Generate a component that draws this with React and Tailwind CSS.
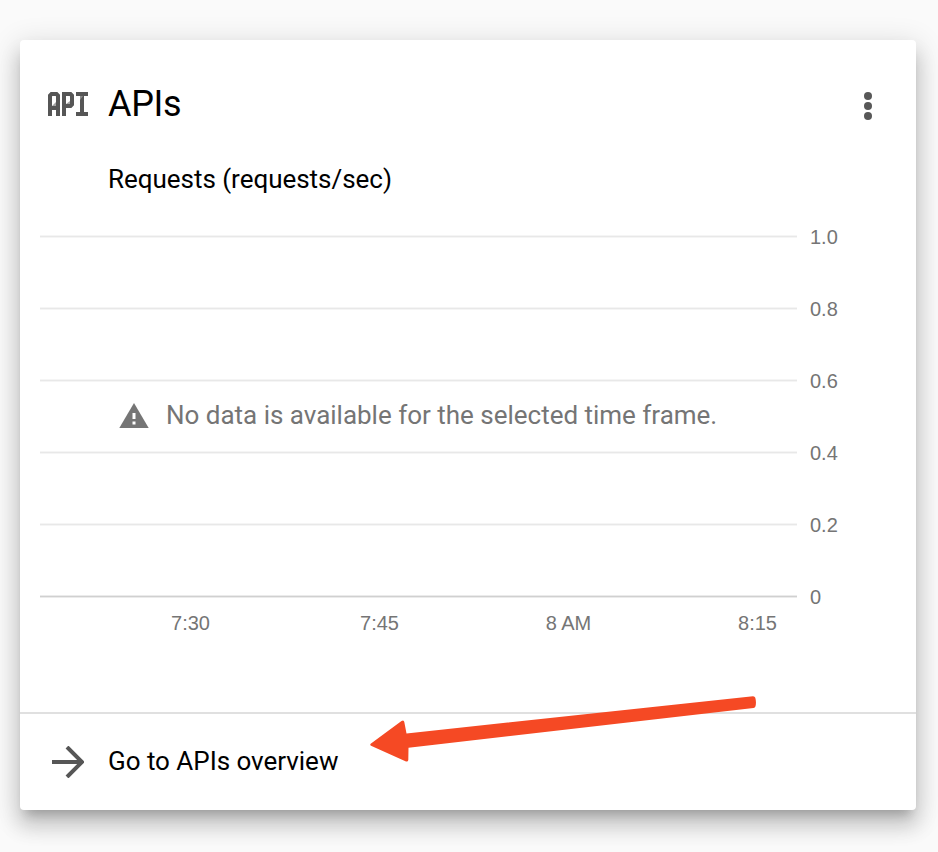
const ticks = [
  { label: '1.0', line: 'border-[#f5f5f5] bg-[#e8e8e8]' },
  { label: '0.8', line: 'border-[#f5f5f5] bg-[#e8e8e8]' },
  { label: '0.6', line: 'border-[#f5f5f5] bg-[#e8e8e8]' },
  { label: '0.4', line: 'border-[#f5f5f5] bg-[#e8e8e8]' },
  { label: '0.2', line: 'border-[#f5f5f5] bg-[#e8e8e8]' },
  { label: '0', line: 'border-[#ebebeb] bg-[#d0d0d0]' },
];
const times = ['7:30', '7:45', '8 AM', '8:15'];

function ApiIcon() {
  return (
    <svg width="40" height="24" viewBox="0 0 40 24" fill="none" stroke="#565656" strokeWidth="4">
      <path d="M2 24V3.500l1.500-1.500h5l1.500 1.500V24M2 16h8" />
      <path d="M16 24V2h6.500l1.500 1.500v9l-1.500 1.500H16" />
      <path d="M28 2h12M28 22h12M34 2v20" />
      <path d="M4 14l4-4v4zM18 12l4-3v3z" fill="#a3a3a3" stroke="none" />
      <path d="M32 8V4h3z" fill="#8c8c8c" stroke="none" />
    </svg>
  );
}

function Header() {
  return (
    <header className="flex h-[128px] shrink-0 items-center pr-10 pl-7">
      <ApiIcon />
      <h1 className="ml-5 text-[36px] leading-[48px] tracking-[-0.3px]">APIs</h1>
      <svg className="mt-1 ml-auto" width="16" height="32" viewBox="0 0 16 32" fill="#585858">
        <circle cx="8" cy="6" r="4" />
        <circle cx="8" cy="16" r="4" />
        <circle cx="8" cy="26" r="4" />
      </svg>
    </header>
  );
}

function Chart() {
  return (
    <section className="relative h-[506px] pl-5">
      {ticks.map((t) => (
        <div key={t.label} className="flex h-[72px] items-center">
          <div className={`mb-px h-[3px] w-[757px] border-y ${t.line}`} />
          <span className="ml-[13px] text-[20px] leading-6 text-[#757575] font-['Liberation_Sans',sans-serif]">{t.label}</span>
        </div>
      ))}
      <div className="-mt-[22px] ml-[56px] flex text-[20px] leading-6 text-[#757575] font-['Liberation_Sans',sans-serif]">
        {times.map((t) => (
          <span key={t} className="w-[189px] text-center">{t}</span>
        ))}
      </div>
      <div className="absolute top-[198px] left-[99px] flex items-center text-[26px] leading-8 tracking-[-0.01px] whitespace-nowrap text-[#757575]">
        <svg className="mt-px mr-[17px]" width="30" height="25" viewBox="0 0 30 25">
          <path d="M15 0l14.700 25H0.300z" fill="#757575" />
          <path d="M13.500 10h3v6h-3zM13.500 18.500h3v3h-3z" fill="#fff" />
        </svg>
        No data is available for the selected time frame.
      </div>
    </section>
  );
}

export default function App() {
  return (
    <div className="relative h-[852px] w-[938px] overflow-hidden bg-[#fafafa] pt-10 pl-5 font-[Roboto,sans-serif] text-black">
      <main className="flex h-[770px] w-[896px] flex-col rounded-[4px] bg-white shadow-[0_10px_10px_-6px_rgba(0,0,0,0.2),0_16px_20px_2px_rgba(0,0,0,0.14),0_6px_28px_4px_rgba(0,0,0,0.12)]">
        <Header />
        <h2 className="-mt-[5px] pl-[88px] text-[26px] leading-8 tracking-[-0.03px]">Requests (requests/sec)</h2>
        <div className="mt-[6px]">
          <Chart />
        </div>
        <footer className="mt-auto flex h-[98px] shrink-0 items-center border-t-2 border-[#e0e0e0] pl-8 text-[26px]">
          <svg width="32" height="32" viewBox="0 0 32 32" fill="none" stroke="#565656" strokeWidth="4">
            <path d="M0 16h29M15 1l15 15-15 15" />
          </svg>
          <span className="mb-[2px] ml-6 tracking-[-0.03px]">Go to APIs overview</span>
        </footer>
      </main>
      <svg className="absolute top-[690px] left-[365px]" width="400" height="80" viewBox="365 690 400 80">
        <path
          d="M371 743.5L401.500 721q2.300-1.500 2.800 1L406.500 733.500L753 696.200q1.800 0 2.300 1.500q1.200 4.500.2 8.500q-.5 1.500-2 1.700L408.500 747.700L408.300 760q-.3 2-2.300 1.500L371 745.700q-1.500-1 0-2.200z"
          fill="#f54924"
        />
      </svg>
    </div>
  );
}
